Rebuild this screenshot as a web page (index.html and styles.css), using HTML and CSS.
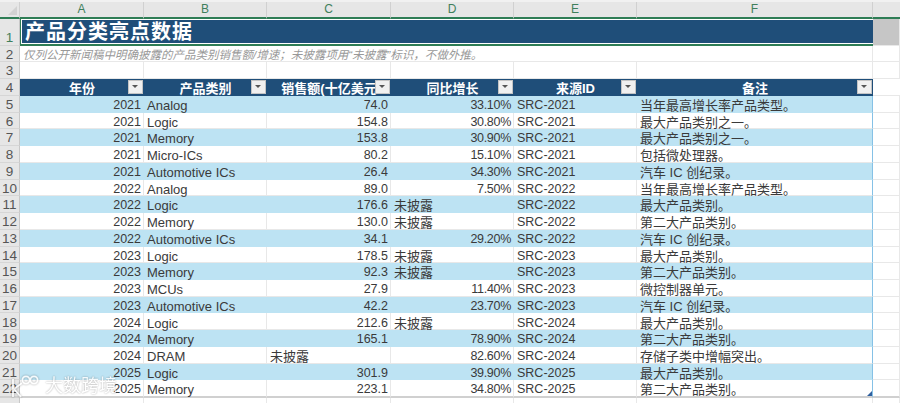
FILE: index.html
```html
<!DOCTYPE html>
<html lang="en">
<head>
    <meta charset="UTF-8">
    <title>产品分类亮点数据</title>
    <link rel="stylesheet" href="styles.css">
</head>
<body>

<div class="sheet">
    <table class="grid">
        <colgroup>
            <col class="c-head"><col class="c-a"><col class="c-b"><col class="c-c"><col class="c-d"><col class="c-e"><col class="c-f"><col class="c-g">
        </colgroup>
        <thead>
            <tr class="cols">
                <th class="corner"><span class="tri"></span></th><th>A</th><th>B</th><th>C</th><th>D</th><th>E</th><th>F</th><th></th>
            </tr>
        </thead>
        <tbody>
            <tr class="r-title">
                <th>1</th>
                <td colspan="6" class="title">产品分类亮点数据</td>
                <td class="title-end"></td>
            </tr>
            <tr>
                <th>2</th>
                <td colspan="6" class="note">仅列公开新闻稿中明确披露的产品类别销售额/增速；未披露项用“未披露”标识，不做外推。</td>
                <td></td>
            </tr>
            <tr><th>3</th><td></td><td></td><td></td><td></td><td></td><td></td><td></td></tr>
            <tr class="hdr">
                <th>4</th>
                <td>年份<i class="filter"></i></td>
                <td>产品类别<i class="filter"></i></td>
                <td>销售额(十亿美元<i class="filter"></i></td>
                <td>同比增长<i class="filter"></i></td>
                <td>来源ID<i class="filter"></i></td>
                <td>备注<i class="filter"></i></td>
                <td class="plain"></td>
            </tr>
            <tr class="row band"><th>5</th><td class="n">2021</td><td>Analog</td><td class="n">74.0</td><td class="n">33.10%</td><td>SRC-2021</td><td>当年最高增长率产品类型。</td><td></td></tr>
            <tr class="row"><th>6</th><td class="n">2021</td><td>Logic</td><td class="n">154.8</td><td class="n">30.80%</td><td>SRC-2021</td><td>最大产品类别之一。</td><td></td></tr>
            <tr class="row band"><th>7</th><td class="n">2021</td><td>Memory</td><td class="n">153.8</td><td class="n">30.90%</td><td>SRC-2021</td><td>最大产品类别之一。</td><td></td></tr>
            <tr class="row"><th>8</th><td class="n">2021</td><td>Micro-ICs</td><td class="n">80.2</td><td class="n">15.10%</td><td>SRC-2021</td><td>包括微处理器。</td><td></td></tr>
            <tr class="row band"><th>9</th><td class="n">2021</td><td>Automotive ICs</td><td class="n">26.4</td><td class="n">34.30%</td><td>SRC-2021</td><td>汽车 IC 创纪录。</td><td></td></tr>
            <tr class="row"><th>10</th><td class="n">2022</td><td>Analog</td><td class="n">89.0</td><td class="n">7.50%</td><td>SRC-2022</td><td>当年最高增长率产品类型。</td><td></td></tr>
            <tr class="row band"><th>11</th><td class="n">2022</td><td>Logic</td><td class="n">176.6</td><td>未披露</td><td>SRC-2022</td><td>最大产品类别。</td><td></td></tr>
            <tr class="row"><th>12</th><td class="n">2022</td><td>Memory</td><td class="n">130.0</td><td>未披露</td><td>SRC-2022</td><td>第二大产品类别。</td><td></td></tr>
            <tr class="row band"><th>13</th><td class="n">2022</td><td>Automotive ICs</td><td class="n">34.1</td><td class="n">29.20%</td><td>SRC-2022</td><td>汽车 IC 创纪录。</td><td></td></tr>
            <tr class="row"><th>14</th><td class="n">2023</td><td>Logic</td><td class="n">178.5</td><td>未披露</td><td>SRC-2023</td><td>最大产品类别。</td><td></td></tr>
            <tr class="row band"><th>15</th><td class="n">2023</td><td>Memory</td><td class="n">92.3</td><td>未披露</td><td>SRC-2023</td><td>第二大产品类别。</td><td></td></tr>
            <tr class="row"><th>16</th><td class="n">2023</td><td>MCUs</td><td class="n">27.9</td><td class="n">11.40%</td><td>SRC-2023</td><td>微控制器单元。</td><td></td></tr>
            <tr class="row band"><th>17</th><td class="n">2023</td><td>Automotive ICs</td><td class="n">42.2</td><td class="n">23.70%</td><td>SRC-2023</td><td>汽车 IC 创纪录。</td><td></td></tr>
            <tr class="row"><th>18</th><td class="n">2024</td><td>Logic</td><td class="n">212.6</td><td>未披露</td><td>SRC-2024</td><td>最大产品类别。</td><td></td></tr>
            <tr class="row band"><th>19</th><td class="n">2024</td><td>Memory</td><td class="n">165.1</td><td class="n">78.90%</td><td>SRC-2024</td><td>第二大产品类别。</td><td></td></tr>
            <tr class="row"><th>20</th><td class="n">2024</td><td>DRAM</td><td>未披露</td><td class="n">82.60%</td><td>SRC-2024</td><td>存储子类中增幅突出。</td><td></td></tr>
            <tr class="row band"><th>21</th><td class="n">2025</td><td>Logic</td><td class="n">301.9</td><td class="n">39.90%</td><td>SRC-2025</td><td>最大产品类别。</td><td></td></tr>
            <tr class="row last"><th>22</th><td class="n">2025</td><td>Memory</td><td class="n">223.1</td><td class="n">34.80%</td><td>SRC-2025</td><td>第二大产品类别。</td><td></td></tr>
            <tr><th></th><td></td><td></td><td></td><td></td><td></td><td></td><td></td></tr>
        </tbody>
    </table>

    <div class="watermark">
        <svg width="32" height="24" viewBox="0 0 32 24" fill="none" stroke="#fff" stroke-width="1.8">
            <path d="M5 5 L5 23"/>
            <path d="M14 9 L6 15 L13 23"/>
            <circle cx="18" cy="6" r="3.6"/>
            <circle cx="26" cy="6" r="3.6"/>
        </svg>
        <span>大数跨境</span>
    </div>
</div>

</body>
</html>
```

FILE: styles.css
```css
* {
    box-sizing: border-box;
}
html, body {
    margin: 0;
    padding: 0;
}
body {
    width: 900px;
    height: 403px;
    overflow: hidden;
    background: #fff;
    font-family: "Liberation Sans", "Noto Sans CJK SC", sans-serif;
    color: #3a3a3a;
}
.sheet {
    position: relative;
    width: 900px;
    height: 403px;
    overflow: hidden;
    padding-top: 2px;
    background: #f1f1f1;
}
.grid {
    border-collapse: separate;
    border-spacing: 0;
    table-layout: fixed;
    width: 900px;
    background: #fff;
    font-size: 13px;
}
.c-head { width: 20px; }
.c-a { width: 124px; }
.c-b { width: 123px; }
.c-c { width: 124px; }
.c-d { width: 123px; }
.c-e { width: 123px; }
.c-f { width: 236px; }
.c-g { width: 27px; }

.grid tr {
    height: 16.74px;
}
.grid td {
    padding: 4px 2px 0 3px;
    border-right: 1px solid #e8e8e8;
    border-bottom: 1px solid #e8e8e8;
    white-space: nowrap;
    line-height: 11.7px;
    height: 16.74px;
}
.grid th {
    padding: 3px 0 0;
    font-weight: normal;
    background: #e6e6e6;
    color: #555;
    font-size: 13.5px;
    line-height: 12.7px;
    border-right: 1px solid #c8c8c8;
    border-bottom: 1px solid #d6d6d6;
}

/* column letters */
.cols {
    height: 16px;
}
.grid .cols th {
    height: 16px;
    padding: 1px 0 0;
    color: #3f7f5c;
    font-size: 12px;
    line-height: 13px;
    border-bottom: 2px solid #2e7d55;
    border-right: 1px solid #d0d0d0;
}
.grid .cols th:last-child {
    border-right: 0;
}
.corner {
    position: relative;
}
.tri {
    position: absolute;
    right: 2px;
    bottom: 2px;
    border-left: 9px solid transparent;
    border-bottom: 9px solid #d2d2d2;
}

/* title row */
.r-title {
    height: 27px;
}
.grid .r-title th {
    height: 27px;
    vertical-align: bottom;
    color: #3f7f5c;
}
.grid .title {
    height: 27px;
    background: #1f4e79;
    color: #fff;
    font-size: 20px;
    font-weight: bold;
    letter-spacing: 1px;
    line-height: 23px;
    padding: 2px 0 0 4px;
    border: 0;
    border-left: 1px solid #2e7d55;
    border-bottom: 2px solid #2e7d55;
    box-shadow: inset 1px 1px 0 #fff, inset 0 -1px 0 #fff;
}
.grid .title-end {
    padding: 0;
    background: #c6c6c6;
    border-bottom: 1px solid #e8e8e8;
}
.grid .note {
    color: #999;
    font-style: italic;
    font-size: 11.5px;
    padding-left: 3px;
}

/* table header */
.grid .hdr td {
    position: relative;
    background: #1f4e79;
    color: #fff;
    font-weight: bold;
    text-align: center;
    padding: 3px 0 0;
    line-height: 13.7px;
    border-right: 0;
    border-bottom: 0;
}
.grid .hdr td.plain {
    background: #fff;
    padding: 0;
    border-bottom: 1px solid #e8e8e8;
}
.filter {
    position: absolute;
    right: 1px;
    top: 1px;
    width: 15px;
    height: 14px;
    background: #f0f0f0;
    border: 1px solid #c4c4c4;
}
.filter::after {
    content: "";
    position: absolute;
    left: 3px;
    top: 4px;
    border-left: 3px solid transparent;
    border-right: 3px solid transparent;
    border-top: 3px solid #555;
}

/* data rows */
.grid .n {
    font-size: 12.5px;
    text-align: right;
}
.grid .row td:nth-child(5).n {
    letter-spacing: -0.3px;
}
.grid .row td:nth-child(6) {
    font-size: 12.5px;
}
.grid .band td {
    background: #bde3f3;
    border-right-color: #bde3f3;
    border-bottom-color: #bde3f3;
}
.grid .row td:nth-child(7) {
    position: relative;
    border-right: 1px solid #85c1e6;
}
.grid .band td:last-child {
    background: #fff;
    border-right-color: #e8e8e8;
    border-bottom-color: #e8e8e8;
}
.last td:nth-child(7)::after {
    content: "";
    position: absolute;
    right: 0;
    bottom: 0;
    border-left: 5px solid transparent;
    border-bottom: 5px solid #2f5f9e;
}
.grid .last td,
.grid .last th {
    border-bottom: 2px solid #d0d0d0;
}

.watermark {
    position: absolute;
    left: 8px;
    bottom: 5px;
    display: flex;
    align-items: center;
    gap: 5px;
    opacity: 0.85;
    color: #fff;
    font-size: 18px;
    line-height: 22px;
    text-shadow: 0 0 2px rgba(0, 0, 0, 0.45);
}
.watermark svg {
    filter: drop-shadow(0 0 1px rgba(0, 0, 0, 0.4));
}
```
